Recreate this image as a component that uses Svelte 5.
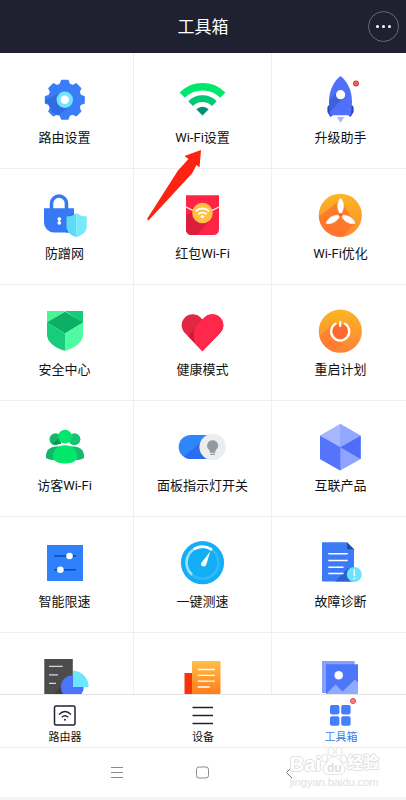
<script lang="ts">
  type Tool = { icon: string; name: string };

  const tools: Tool[] = [
    { icon: 'gear', name: '路由设置' },
    { icon: 'wifi', name: 'Wi-Fi设置' },
    { icon: 'rocket', name: '升级助手' },
    { icon: 'lock', name: '防蹭网' },
    { icon: 'envelope', name: '红包Wi-Fi' },
    { icon: 'fan', name: 'Wi-Fi优化' },
    { icon: 'shield', name: '安全中心' },
    { icon: 'heart', name: '健康模式' },
    { icon: 'power', name: '重启计划' },
    { icon: 'guests', name: '访客Wi-Fi' },
    { icon: 'light', name: '面板指示灯开关' },
    { icon: 'cube', name: '互联产品' },
    { icon: 'sliders', name: '智能限速' },
    { icon: 'gauge', name: '一键测速' },
    { icon: 'diagnose', name: '故障诊断' },
    { icon: 'report', name: '' },
    { icon: 'book', name: '' },
    { icon: 'photos', name: '' },
  ];

  const tabs = [
    { id: 'router', name: '路由器' },
    { id: 'devices', name: '设备' },
    { id: 'toolbox', name: '工具箱' },
  ];

  let activeTab = 'toolbox';

  const teeth = [0, 45, 90, 135, 180, 225, 270, 315];
</script>

<div class="screen">
  <header>
    <h1>工具箱</h1>
    <button class="more" aria-label="更多">
      <svg width="17" height="5" viewBox="0 0 17 5" fill="#fff">
        <circle cx="2.5" cy="2.5" r="1.5" />
        <circle cx="8.5" cy="2.5" r="1.5" />
        <circle cx="14.5" cy="2.5" r="1.5" />
      </svg>
    </button>
  </header>

  <main>
    <div class="grid">
      {#each tools as tool}
        <button class="tool" aria-label={tool.name || tool.icon}>
          <svg class="tool-icon" viewBox="0 0 49 48">
            {#if tool.icon === 'gear'}
              <g fill="#3a7dfa">
                <circle cx="24.8" cy="23.8" r="16.8" />
                {#each teeth as angle}
                  <path d="M19.2 9L21.2 3.8H28.4L30.4 9Z" transform="rotate({angle} 24.8 23.8)" />
                {/each}
              </g>
              <path d="M5.2 24L19 17.5L30.5 29.5L18 39.5A17 17 0 0 1 8.2 27.5L5 27Z" fill="#306de2" />
              <circle cx="24.8" cy="23.8" r="8.2" fill="#75e5fb" />
              <circle cx="24.8" cy="23.8" r="4.2" fill="#fff" />
            {:else if tool.icon === 'wifi'}
              <g fill="none">
                <path d="M4.2 19.2A28.7 28.7 0 0 1 44.8 19.2" stroke="#00e86c" stroke-width="7.4" />
                <path d="M12.6 27.6A16.8 16.8 0 0 1 36.4 27.6" stroke="#00c875" stroke-width="6.6" />
              </g>
              <path d="M24.5 39.5L18.3 33.3A8.8 8.8 0 0 1 30.7 33.3Z" fill="#058c77" />
            {:else if tool.icon === 'rocket'}
              <path d="M13 29L11.4 31V36L14.4 41L17 39V29Z" fill="#2746c4" />
              <path d="M36 29L37.6 31V36L34.6 41L32 39V29Z" fill="#2746c4" />
              <path d="M24.5 0C31 5 36 14 36 26L35 39.2H14L13 26C13 14 18 5 24.5 0Z" fill="#4f70fb" />
              <path d="M13.2 24L21 16L27.6 22L14 35.5Z" fill="#4161dc" />
              <circle cx="24.6" cy="18.7" r="4.6" fill="#fff" />
              <path d="M20.9 41H28.3L24.6 46.8Z" fill="#a6b5ff" />
              <circle cx="40" cy="7.5" r="3" fill="#e63a3a" />
              <circle cx="40" cy="7.5" r="1.2" fill="none" stroke="#ffabab" stroke-width=".6" />
            {:else if tool.icon === 'lock'}
              <path d="M11.5 18V11.5A7.5 7.5 0 0 1 26.5 11.5V18" fill="none" stroke="#3778f5" stroke-width="3.6" />
              <path d="M4 16.3H34V40.5H14A10 10 0 0 1 4 30.5Z" fill="#3778f5" />
              <path d="M26 26L34 21V40.5H26Z" fill="#2c69df" />
              <path d="M19.3 25.2A1.8 1.8 0 0 1 20.2 28.6V29.4A1.8 1.8 0 1 1 18.4 29.4V28.6A1.8 1.8 0 0 1 19.3 25.2Z" fill="#fff" />
              <path d="M36.5 21C33.5 23.5 30 24.4 26.4 24.5V35C26.4 40 31 43.5 36.5 45.2Z" fill="#5adcf4" />
              <path d="M36.5 21C39.5 23.5 43 24.4 46.7 24.5V35C46.7 40 42 43.5 36.5 45.2Z" fill="#76e9fb" />
            {:else if tool.icon === 'envelope'}
              <path d="M8 3.3H41V37.5A5.5 5.5 0 0 1 35.5 43H13.5A5.5 5.5 0 0 1 8 37.5Z" fill="#ff2445" />
              <path d="M8 24L17 17L32 28L19 43H13.5A5.5 5.5 0 0 1 8 37.5Z" fill="#dc1d3c" />
              <path d="M8 15L16 19M41 15L33 19" stroke="#fff" stroke-width="1.3" />
              <circle cx="24.5" cy="21" r="10.3" fill="#ffc044" />
              <g fill="none" stroke="#fff" stroke-width="1.9">
                <path d="M17.8 19.2A9.8 9.8 0 0 1 31.2 19.2" />
                <path d="M20.4 22.2A6 6 0 0 1 28.6 22.2" />
              </g>
              <path d="M24.5 26.6L22.3 24.4A3.2 3.2 0 0 1 26.7 24.4Z" fill="#fff" />
            {:else if tool.icon === 'fan'}
              <defs>
                <linearGradient id="fan-fill" x1="0" y1="0" x2="0" y2="1">
                  <stop offset="0" stop-color="#fcb623" />
                  <stop offset="1" stop-color="#fd8a31" />
                </linearGradient>
                <clipPath id="fan-clip"><circle cx="24.3" cy="23.3" r="21.6" /></clipPath>
              </defs>
              <circle cx="24.3" cy="23.3" r="21.6" fill="url(#fan-fill)" />
              <path d="M24 8L39 31L24 48H0V27Z" fill="#ff6b2c" opacity=".7" clip-path="url(#fan-clip)" />
              {#each [0, 120, 240] as angle}
                <path d="M24.6 22.5C20.6 17 20.9 10 24.6 6.4C28.3 10 28.6 17 24.6 22.5Z" fill="#fff" stroke="#fff" stroke-width=".6" transform="rotate({angle} 24.6 23)" />
              {/each}
              <circle cx="24.6" cy="23" r="2" fill="#f4652c" />
            {:else if tool.icon === 'shield'}
              <path d="M7 3H25L7 15Z" fill="#4bf397" />
              <path d="M25 3H43V15Z" fill="#16cb79" />
              <path d="M25 3.4L43 14.6L25 25.6L7 14.6Z" fill="#0bb064" />
              <path d="M7 14.6L25 25.6V42.8C15 40.5 7 34 7 26.5Z" fill="#17cd79" />
              <path d="M43 14.6L25 25.6V42.8C35 40.5 43 34 43 26.5Z" fill="#4ffba0" />
            {:else if tool.icon === 'heart'}
              <path d="M24.5 43.2L6.9 25A11 11 0 0 1 22.5 9.4L24.5 11.4L26.5 9.4A11 11 0 0 1 42.1 25Z" fill="#e22743" />
              <path d="M10 28L22 15L24.5 43.2Z" fill="#c71d38" />
              <path d="M24.5 43.2L18 36.4C15 31 14.5 22 18.5 17.4L26.5 9.4A11 11 0 0 1 42.1 25Z" fill="#ff284a" />
            {:else if tool.icon === 'power'}
              <defs>
                <linearGradient id="power-fill" x1="0" y1="0" x2="0" y2="1">
                  <stop offset="0" stop-color="#fcb623" />
                  <stop offset="1" stop-color="#fd8138" />
                </linearGradient>
                <clipPath id="power-clip"><circle cx="24.3" cy="23.2" r="21.6" /></clipPath>
              </defs>
              <circle cx="24.3" cy="23.2" r="21.6" fill="url(#power-fill)" />
              <path d="M17 16L31 30L14 47H0V31Z" fill="#ff7431" opacity=".6" clip-path="url(#power-clip)" />
              <circle cx="24.2" cy="23.4" r="7.5" fill="#fb6a30" />
              <path d="M19.6 15.6A9.1 9.1 0 1 0 28.8 15.6" fill="none" stroke="#fff" stroke-width="2.2" stroke-linecap="round" />
              <path d="M24.2 13.2V18.8" stroke="#fff" stroke-width="2.2" />
            {:else if tool.icon === 'guests'}
              <circle cx="15.5" cy="15.3" r="6" fill="#17b869" />
              <path d="M12 20.2L21 12V20Z" fill="#0b9656" />
              <circle cx="34.4" cy="15.3" r="6" fill="#16c474" />
              <path d="M6 34V32C6 26 10.5 22.5 16 22.5H25V36H12Q8 35.5 6 34Z" fill="#14b46a" />
              <path d="M44 34V32C44 26 39.5 22.5 34 22.5H25V36H38Q42 35.5 44 34Z" fill="#17ba6d" />
              <circle cx="25" cy="12.7" r="6.9" fill="#02e66b" />
              <path d="M25 21.2C32 21.2 37.3 25.5 37.3 33C37.3 37 32 39.4 25 39.4S12.7 37 12.7 33C12.7 25.5 18 21.2 25 21.2Z" fill="#02e66b" />
            {:else if tool.icon === 'light'}
              <rect x=".7" y="11" width="42" height="24" rx="12" fill="#2f86fa" />
              <path d="M6 32.5L30 12V35H13Q9 35 6 32.5Z" fill="#2e6cee" />
              <circle cx="34.6" cy="23" r="13.2" fill="#ededee" />
              <path d="M34.6 16.2A5.4 5.4 0 0 1 37.8 26L37.2 28.7H32L31.4 26A5.4 5.4 0 0 1 34.6 16.2Z" fill="#929a9f" />
              <path d="M32.3 30.3H36.9" stroke="#929a9f" stroke-width="1.3" />
            {:else if tool.icon === 'cube'}
              <path d="M24.3 0L44.7 11.7V35L24.3 46.4L4 35V11.7Z" fill="#8ea4ff" />
              <path d="M24.3 0V23.2L4 11.7Z" fill="#a6b7ff" />
              <path d="M24.3 0V23.2L44.7 11.7Z" fill="#92a7ff" />
              <path d="M4 11.7L24.3 23.2V46.4L4 35Z" fill="#5474fb" />
              <path d="M44.7 11.7L24.3 23.2L44.7 35Z" fill="#4e6efa" />
            {:else if tool.icon === 'sliders'}
              <rect x="7" y="5" width="36" height="36" fill="#2f80fa" />
              <path d="M14 16H36M14 29.7H36" stroke="#0a4bb0" stroke-width="1.6" />
              <circle cx="29.5" cy="16" r="3.3" fill="#fff" />
              <circle cx="20.4" cy="29.7" r="3.3" fill="#fff" />
            {:else if tool.icon === 'gauge'}
              <circle cx="24.5" cy="22.7" r="21.6" fill="#13aef5" />
              <circle cx="24.5" cy="22.7" r="16" fill="none" stroke="#34b9f7" stroke-width="2.6" />
              <path d="M14 34.8A16 16 0 0 1 24.5 6.7" fill="none" stroke="#9be0fc" stroke-width="2.6" />
              <path d="M17 8.6A16 16 0 0 1 33 9.2" fill="none" stroke="#fff" stroke-width="2.8" stroke-linecap="round" />
              <path d="M32.2 11.5L28.2 24.8A2.6 2.6 0 0 1 23.3 22.9Z" fill="#fff" />
            {:else if tool.icon === 'diagnose'}
              <path d="M6 2.2H31L38 9.2V41.6H6Z" fill="#3d7bf6" />
              <path d="M31 2.2L38 9.2H31Z" fill="#234f9f" />
              <path d="M19 41.6L32 28L38 33V41.6Z" fill="#2b62d2" />
              <path d="M12.3 13.8H31.7M12.3 20.5H31.7M12.3 27.2H27.5M12.3 33.6H27.5" stroke="#fff" stroke-width="1.5" />
              <circle cx="38.3" cy="34.4" r="7.5" fill="#6ce4ff" />
              <path d="M38.3 29.5V36M38.3 37.4V39" stroke="#fff" stroke-width="1.4" />
            {:else if tool.icon === 'report'}
              <rect x="4.3" y="3" width="28.5" height="42" fill="#4c4c4c" />
              <path d="M13 39L26 24L33 28V45H13Z" fill="#3f4044" />
              <path d="M9 10.3H22.7M9 18.8H18M9 27.4H16" stroke="#d8d8d8" stroke-width="1.2" />
              <circle cx="32.3" cy="31" r="11.5" fill="#4b75fb" />
              <path d="M33 31V14.8A15.8 16.2 0 0 1 48.6 31Z" fill="#6ee4ff" />
            {:else if tool.icon === 'book'}
              <defs>
                <linearGradient id="book-fill" x1="0" y1="0" x2="0" y2="1">
                  <stop offset="0" stop-color="#ffbf48" />
                  <stop offset="1" stop-color="#ff7d1c" />
                </linearGradient>
              </defs>
              <rect x="6.5" y="17" width="12" height="21" fill="#f93208" />
              <rect x="14" y="5" width="28.5" height="33" rx="1" fill="url(#book-fill)" />
              <path d="M19.7 13.5H36.8M19.7 19.3H36.8M19.7 25.2H36.8M19.7 31H32" stroke="#fff" stroke-width="1.3" />
            {:else if tool.icon === 'photos'}
              <rect x="6" y="5" width="32.7" height="32" fill="#87a1fb" />
              <rect x="10" y="8.3" width="32" height="32" fill="#4c77fb" />
              <circle cx="22.7" cy="19.3" r="4.3" fill="#fff" />
              <path d="M10 38L19.5 28.5L26.5 35.5L39 23.5L42 26.5V40H10Z" fill="#90abff" />
            {/if}
          </svg>
          <span>{tool.name}</span>
          {#if tool.icon === 'wifi'}
            <svg class="pointer" width="56" height="72" viewBox="0 0 56 72">
              <path d="M55 1L38.5 7L42.5 10L32 21.5L1 70L2.5 71.5L46 24.5L50.5 16L53.5 18.5Z" fill="#fc2313" />
            </svg>
          {/if}
        </button>
      {/each}
    </div>
  </main>

  <nav class="tabs">
    {#each tabs as tab}
      <a href="#{tab.id}" class:active={tab.id === activeTab} on:click={() => (activeTab = tab.id)}>
        <svg class="tab-icon" viewBox="0 0 34 24">
          {#if tab.id === 'router'}
            <rect x="6.5" y="3" width="20.5" height="19" rx="1.5" fill="none" stroke="#20222f" stroke-width="1.5" />
            <g fill="none" stroke="#20222f" stroke-width="1.3">
              <path d="M11 11.5Q17 5.5 23 11.5" />
              <path d="M13.8 14.2Q17 11.3 20.2 14.2" />
            </g>
            <circle cx="17" cy="16.7" r="1" fill="#20222f" />
          {:else if tab.id === 'devices'}
            <path d="M6.5 4.5H27M6.5 12.5H27M6.5 20.5H27" stroke="#20222f" stroke-width="1.4" />
          {:else}
            <g fill="#467dfb">
              <rect x="6" y="2" width="9.4" height="9.4" rx="1.8" />
              <rect x="17.2" y="2" width="9.4" height="9.4" rx="1.8" />
              <rect x="6" y="13.3" width="9.4" height="9.4" rx="1.8" />
              <rect x="17.2" y="13.3" width="9.4" height="9.4" rx="1.8" />
            </g>
          {/if}
        </svg>
        <span>{tab.name}</span>
        {#if tab.id === 'toolbox'}
          <i class="dot"></i>
        {/if}
      </a>
    {/each}
  </nav>

  <footer>
    <button aria-label="菜单">
      <svg width="24" height="24" viewBox="0 0 24 24"><path d="M6 6.5H18M6 11.5H18M6 16.5H18" stroke="#8a8a8a" stroke-width="1" /></svg>
    </button>
    <button aria-label="主页">
      <svg width="24" height="24" viewBox="0 0 24 24"><rect x="5.5" y="6" width="12" height="11" rx="2.5" fill="none" stroke="#8a8a8a" stroke-width="1" /></svg>
    </button>
    <button aria-label="返回">
      <svg width="24" height="24" viewBox="0 0 24 24"><path d="M15 6L9.5 11.5L15 17" fill="none" stroke="#777" stroke-width="1" /></svg>
    </button>
    <div class="watermark">
      <div class="brand">
        <span class="bai">Bai</span>
        <svg width="26" height="30" viewBox="0 0 26 30" fill="#fff" stroke="#e2e2e2" stroke-width="1">
          <ellipse cx="3.8" cy="12" rx="3" ry="4" />
          <ellipse cx="10" cy="5.5" rx="3" ry="4.3" />
          <ellipse cx="18" cy="5.5" rx="3" ry="4.3" />
          <ellipse cx="22.7" cy="13" rx="3" ry="4" />
          <path d="M13 10.5C17 10.5 18.500 15 21.500 18C26 22.500 23.500 28.500 18.500 28.500H7.500C2 28.500 0 22.500 4.500 18C7.500 15 9 10.500 13 10.500Z" />
          <text x="6" y="26" fill="#dedede" stroke="none">du</text>
        </svg>
        <span class="jingyan">经验</span>
      </div>
      <div class="url">jingyan.baidu.com</div>
    </div>
  </footer>
</div>

<style>
  :global(body) {
    margin: 0;
    background: #fff;
  }
  .screen {
    display: flex;
    flex-direction: column;
    height: 100vh;
    overflow: hidden;
    box-sizing: border-box;
    border-bottom: 3px solid #f4f4f4;
    font-family: Roboto, "Noto Sans CJK SC", sans-serif;
    color: #111;
  }
  button {
    padding: 0;
    border: 0;
    background: none;
    font: inherit;
    color: inherit;
  }
  header {
    display: grid;
    grid-template-columns: 1fr auto 1fr;
    align-items: center;
    flex: none;
    height: 53px;
    padding: 0 7px;
    background: #1f2030;
    color: #fff;
  }
  h1 {
    grid-column: 2;
    margin: 0;
    font-size: 17px;
    font-weight: 400;
    line-height: 24px;
  }
  .more {
    display: flex;
    align-items: center;
    justify-content: center;
    justify-self: end;
    width: 31px;
    height: 31px;
    border: 1px solid #686977;
    border-radius: 50%;
  }
  main {
    flex: 1;
    min-height: 0;
    overflow: hidden;
  }
  /* the outer columns bleed slightly past the screen edge */
  .grid {
    display: grid;
    grid-template-columns: repeat(3, 1fr);
    grid-auto-rows: 116px;
    margin: 0 -4px;
  }
  .tool {
    position: relative;
    display: flex;
    flex-direction: column;
    align-items: center;
    gap: 4px;
    padding-top: 23px;
    border-right: 1px solid #efefef;
    border-bottom: 1px solid #efefef;
    font-size: 13px;
    line-height: 20px;
  }
  .tool-icon {
    flex: none;
    width: 49px;
    height: 48px;
  }
  .pointer {
    position: absolute;
    top: 96px;
    left: 12px;
    z-index: 1;
  }
  .tabs {
    display: grid;
    grid-template-columns: repeat(3, 1fr);
    flex: none;
    margin: 0 -4px;
    border-top: 1px solid #e4e4e4;
    border-bottom: 1px solid #ececec;
  }
  .tabs a {
    position: relative;
    display: flex;
    flex-direction: column;
    align-items: center;
    gap: 3px;
    padding: 8px 0 1px;
    color: #111;
    font-size: 11px;
    line-height: 16px;
    text-decoration: none;
  }
  .tabs a.active {
    color: #3d80dc;
  }
  .tab-icon {
    width: 34px;
    height: 24px;
  }
  .dot {
    position: absolute;
    top: 3px;
    left: calc(50% + 9px);
    width: 4px;
    height: 4px;
    border: 1px solid #e04646;
    border-radius: 50%;
    background: #ff8080;
  }
  footer {
    position: relative;
    display: flex;
    align-items: center;
    justify-content: center;
    gap: 62px;
    flex: none;
    height: 49px;
  }
  footer button {
    width: 24px;
    height: 24px;
  }
  footer button svg {
    display: block;
  }
  .watermark {
    position: absolute;
    top: -2px;
    right: 27px;
    color: #fff;
    font-family: "Liberation Sans", "Noto Sans CJK SC", sans-serif;
    text-shadow: 1px 0 #e0e0e0, -1px 0 #e0e0e0, 0 1px #e0e0e0, 0 -1px #e0e0e0;
    pointer-events: none;
  }
  .brand {
    display: flex;
    align-items: flex-end;
    height: 30px;
    font-weight: 700;
  }
  .brand text {
    font-size: 12px;
    text-shadow: none;
  }
  .bai {
    font-size: 20px;
    line-height: 24px;
  }
  .jingyan {
    font-size: 16px;
    line-height: 26px;
  }
  .url {
    color: #e0e0e0;
    font-size: 11px;
    line-height: 12px;
    text-shadow: none;
  }
</style>
